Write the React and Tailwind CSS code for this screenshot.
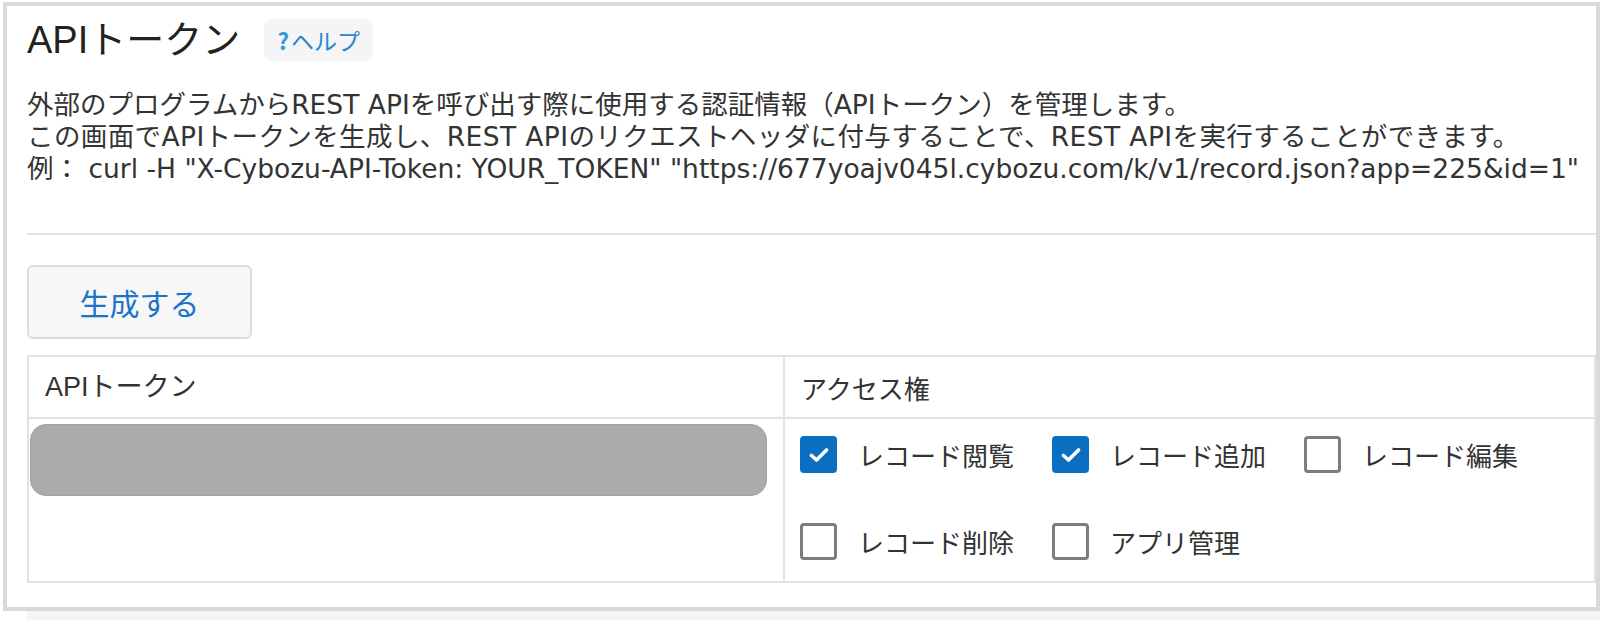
import { useState } from "react";

const PERMS = [
  { key: "view", label: "レコード閲覧", checked: true },
  { key: "add", label: "レコード追加", checked: true },
  { key: "edit", label: "レコード編集", checked: false },
  { key: "delete", label: "レコード削除", checked: false },
  { key: "manage", label: "アプリ管理", checked: false },
];

function CheckBox({ checked, onClick }) {
  if (checked) {
    return (
      <button onClick={onClick} className="w-[37px] h-[37px] shrink-0 rounded-[4px] bg-[#0b6fc1] flex items-center justify-center">
        <svg width="20" height="16" viewBox="0 0 20 16" fill="none">
          <path d="M2.5 8.5 L7.5 13 L17.5 3" stroke="white" strokeWidth="3.6" strokeLinecap="round" strokeLinejoin="round" />
        </svg>
      </button>
    );
  }
  return <button onClick={onClick} className="w-[37px] h-[37px] shrink-0 rounded-[4px] border-[3px] border-[#7d7d7d] bg-white" />;
}

export default function App() {
  const [perms, setPerms] = useState(PERMS);

  const toggle = (key) =>
    setPerms((p) => p.map((x) => (x.key === key ? { ...x, checked: !x.checked } : x)));

  return (
    <div className="w-[1600px] h-[620px] overflow-hidden bg-white text-[#333] font-['Noto_Sans_CJK_JP',sans-serif]">
      <div className="ml-[3px] mt-[2px] w-[1597px] h-[609px] border-4 border-[#d9d9d9] pl-[20px] overflow-hidden">
        {/* 見出し */}
        <div className="flex items-center h-[42px] mt-[13px]">
          <h1 className="text-[38px] leading-none text-[#222] font-['Liberation_Sans','Noto_Sans_CJK_JP',sans-serif]">APIトークン</h1>
          <a className="ml-[24px] h-[42px] px-[13px] rounded-lg bg-[#f5f5f5] flex items-center text-[23px] text-[#2a86d3]">
            <span className="font-bold text-[#3498db] mr-[2px]">?</span>ヘルプ
          </a>
        </div>

        {/* 説明 */}
        <div className="mt-[28px] text-[26.5px] leading-[32px] whitespace-nowrap font-['DejaVu_Sans','Noto_Sans_CJK_JP',sans-serif]">
          <p>外部のプログラムからREST APIを呼び出す際に使用する認証情報（APIトークン）を管理します。</p>
          <p className="tracking-[0.4px]">この画面でAPIトークンを生成し、REST APIのリクエストヘッダに付与することで、REST APIを実行することができます。</p>
          <p>例： curl -H "X-Cybozu-API-Token: YOUR_TOKEN" "https://677yoajv045l.cybozu.com/k/v1/record.json?app=225&amp;id=1"</p>
        </div>

        <hr className="mt-[48px] border-0 border-t-2 border-[#e3e3e3]" />

        <button className="mt-[30px] w-[225px] h-[74px] rounded-md border-2 border-[#dcdcdc] bg-[#f7f7f7] text-[30px] text-[#1b74c9]">
          生成する
        </button>

        {/* トークン一覧 */}
        <div className="mt-[16px] border-2 border-[#e2e2e2] grid grid-cols-[756px_1fr]">
          <div className="h-[62px] flex items-center pl-[16px] text-[27px] border-r-2 border-b-2 border-[#e2e2e2] font-['Liberation_Sans','Noto_Sans_CJK_JP',sans-serif]">APIトークン</div>
          <div className="h-[62px] flex items-center pl-[16px] text-[26px] border-b-2 border-[#e2e2e2]">アクセス権</div>
          <div className="border-r-2 border-[#e2e2e2] pt-[5px] pl-[1px] pr-[16px]">
            <div className="h-[72px] rounded-[16px] bg-[#ababab] border border-[#a3a3a3]" />
          </div>
          <div className="pt-[17px] pl-[15px] pb-[21px] flex flex-wrap gap-y-[50px]">
            {perms.map((p) => (
              <label key={p.key} className="w-[252px] flex items-center cursor-pointer">
                <CheckBox checked={p.checked} onClick={() => toggle(p.key)} />
                <span className="ml-[21px] text-[26px] leading-none whitespace-nowrap">{p.label}</span>
              </label>
            ))}
          </div>
        </div>
      </div>
      <div className="ml-[27px] h-[9px] bg-[#f5f5f5]" />
    </div>
  );
}
